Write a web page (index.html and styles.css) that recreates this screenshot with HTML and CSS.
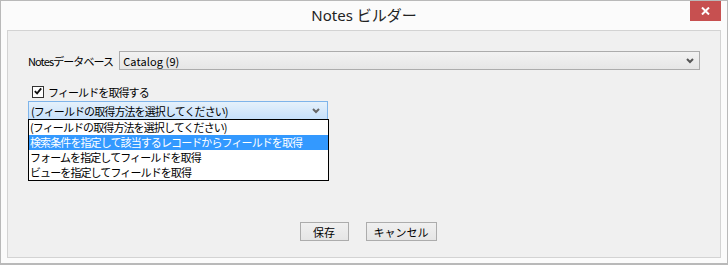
FILE: index.html
```html
<!DOCTYPE html>
<html lang="ja">
<head>
    <meta charset="UTF-8">
    <title>Notes ビルダー</title>
    <link rel="stylesheet" href="styles.css">
</head>
<body>
    <div class="window">
        <div class="titlebar">
            <span class="title">Notes ビルダー</span>
            <div class="close-btn">
                <svg width="9" height="8" viewBox="0 0 9 8">
                    <path d="M1 0.5 L8 7.5 M8 0.5 L1 7.5" stroke="#fff" stroke-width="2" fill="none"/>
                </svg>
            </div>
        </div>
        <div class="panel">
            <div class="db-row">
                <span class="db-label">Notesデータベース</span>
                <div class="select db-select">
                    <span class="latin">Catalog (9)</span>
                    <svg class="arrow" width="8" height="6" viewBox="0 0 8 6">
                        <path d="M1 1 L4 4 L7 1" stroke="#555" stroke-width="2" fill="none"/>
                    </svg>
                </div>
            </div>

            <label class="check-row">
                <span class="checkbox">
                    <svg width="11" height="11" viewBox="0 0 11 11">
                        <path d="M2 5 L4.5 7.5 L9 2" stroke="#111" stroke-width="2" fill="none"/>
                    </svg>
                </span>
                <span>フィールドを取得する</span>
            </label>

            <div class="combo">
                <div class="select open">
                    <span>(フィールドの取得方法を選択してください)</span>
                    <svg class="arrow" width="8" height="6" viewBox="0 0 8 6">
                        <path d="M1 1 L4 4 L7 1" stroke="#666" stroke-width="2" fill="none"/>
                    </svg>
                </div>
                <ul class="dropdown">
                    <li>(フィールドの取得方法を選択してください)</li>
                    <li class="active">検索条件を指定して該当するレコードからフィールドを取得</li>
                    <li>フォームを指定してフィールドを取得</li>
                    <li>ビューを指定してフィールドを取得</li>
                </ul>
            </div>

            <div class="buttons">
                <button class="btn save">保存</button>
                <button class="btn">キャンセル</button>
            </div>
        </div>
    </div>
</body>
</html>
```

FILE: styles.css
```css
html, body {
    margin: 0;
    padding: 0;
}
body {
    width: 728px;
    height: 265px;
    overflow: hidden;
    font-family: "Noto Sans CJK JP", "Noto Sans", sans-serif;
    font-size: 11px;
    color: #000;
}
.window {
    box-sizing: border-box;
    width: 728px;
    height: 265px;
    border: 1px solid #b9b9b9;
    border-bottom-width: 2px;
    background: #fbfbfb;
    padding: 0 6px 5px 6px;
    display: flex;
    flex-direction: column;
}
.titlebar {
    height: 29px;
    position: relative;
    display: flex;
    align-items: center;
    justify-content: center;
}
.title {
    font-family: "Noto Sans", "Noto Sans CJK JP", sans-serif;
    font-size: 15px;
    color: #222;
    margin-top: -2px;
}
.close-btn {
    position: absolute;
    top: 0;
    right: 0;
    width: 31px;
    height: 20px;
    background: #c75050;
    display: flex;
    align-items: center;
    justify-content: center;
}
.panel {
    flex: 1;
    border: 1px solid #d3d3d3;
    background: #f0f0f0;
    padding: 20px 20px 16px 20px;
    display: flex;
    flex-direction: column;
}
.db-row {
    display: flex;
    align-items: center;
    gap: 6px;
}
.db-label {
    letter-spacing: -0.9px;
}
.select {
    box-sizing: border-box;
    height: 19px;
    border: 1px solid #acacac;
    background: linear-gradient(#f2f2f2, #e6e6e6);
    display: flex;
    align-items: center;
    justify-content: space-between;
    padding: 0 5px 0 2px;
    letter-spacing: -0.9px;
}
.select .latin {
    letter-spacing: 0.1px;
    padding-left: 1px;
}
.db-select {
    flex: 1;
}
.check-row {
    display: flex;
    align-items: center;
    gap: 4px;
    margin: 16px 0 0 4px;
    height: 11px;
    letter-spacing: -0.9px;
}
.checkbox {
    box-sizing: border-box;
    width: 12px;
    height: 12px;
    border: 1px solid #333;
    background: #fff;
    display: flex;
    align-items: center;
    justify-content: center;
}
.combo {
    position: relative;
    width: 300px;
    margin-top: 4px;
}
.select.open {
    border-color: #7eb4ea;
    background: linear-gradient(#e5f1fb, #c6e0fb);
    padding-right: 7px;
}
.dropdown {
    position: absolute;
    top: 18px;
    left: 0;
    width: 301px;
    box-sizing: border-box;
    margin: 0;
    padding: 0;
    list-style: none;
    border: 1px solid #000;
    background: #fff;
    letter-spacing: -0.9px;
}
.dropdown li {
    height: 15px;
    line-height: 15px;
    padding-left: 1px;
    white-space: nowrap;
}
.dropdown li.active {
    background: #3399ff;
    color: #fff;
}
.buttons {
    margin-top: auto;
    display: flex;
    justify-content: center;
    gap: 17px;
    padding-left: 8px;
}
.btn {
    box-sizing: border-box;
    height: 19px;
    border: 1px solid #acacac;
    background: linear-gradient(#f0f0f0, #e5e5e5);
    font-family: "Noto Sans CJK JP", sans-serif;
    font-size: 11px;
    padding: 0;
    color: #000;
}
.save {
    width: 49px;
}
.btn + .btn {
    width: 71px;
}
```
